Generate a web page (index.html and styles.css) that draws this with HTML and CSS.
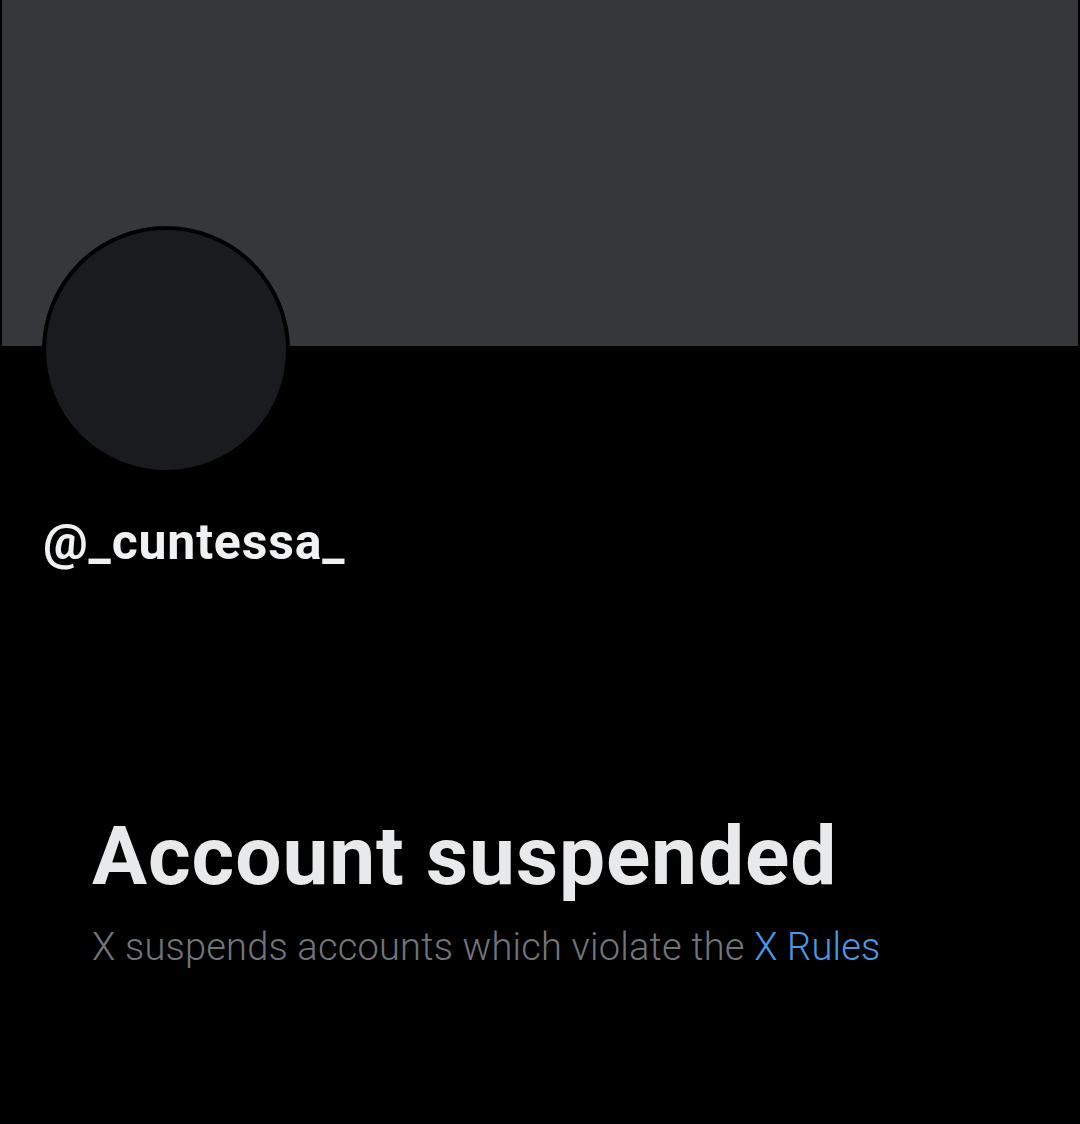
FILE: index.html
```html
<html lang="en">
<head>
  <title>Account suspended</title>
  <meta name="viewport" content="width=device-width, initial-scale=1">
  <meta charset="UTF-8">
  <link rel="stylesheet" href="styles.css">
</head>
<body>
  <div class="profile">
    <div class="banner"></div>
    <div class="avatar"></div>
    <div class="handle">@_cuntessa_</div>
  </div>
  <div class="suspended">
    <h1>Account suspended</h1>
    <p>X suspends accounts which violate the <a href="#">X Rules</a></p>
  </div>
</body>
</html>
```

FILE: styles.css
```css
* {
  box-sizing: border-box;
}
body {
  margin: 0;
  background: #000;
  font-family: Roboto, "Liberation Sans", sans-serif;
  color: #e7e9ea;
  height: 1124px;
  overflow: hidden;
}
.banner {
  margin-left: 2px;
  width: 1076px;
  height: 346px;
  background: #36373b;
}
.avatar {
  width: 248px;
  height: 248px;
  margin: -120px 0 0 42px;
  border-radius: 50%;
  border: 4px solid #000;
  background: #1a1b1f;
  position: relative;
}
.handle {
  margin: 38px 0 0 43px;
  font-size: 50px;
  font-weight: 700;
  line-height: 60px;
  letter-spacing: 0.8px;
  color: #eff1f2;
}
.suspended {
  padding: 238px 0 0 92px;
}
.suspended h1 {
  margin: 0;
  font-size: 82px;
  font-weight: 700;
  line-height: 92px;
  letter-spacing: 0.9px;
}
.suspended p {
  margin: 21px 0 0;
  font-size: 38px;
  font-weight: 300;
  line-height: 48px;
  letter-spacing: 0.2px;
  color: #71767b;
}
.suspended a {
  color: #4a99e9;
  text-decoration: none;
}
```
